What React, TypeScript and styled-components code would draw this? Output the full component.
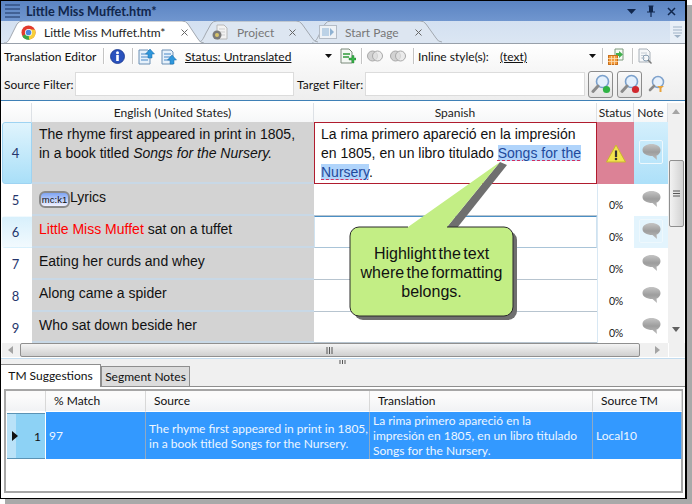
import React from "react";
import styled, { createGlobalStyle } from "styled-components";

const UI_FONT = `Lato, "Noto Sans", sans-serif`;
const CELL_FONT = `"Liberation Sans", Arial, sans-serif`;

const Global = createGlobalStyle`
  html, body { margin: 0; padding: 0; background: #fff; }
  body { font-family: ${UI_FONT}; font-size: 12px; color: #111; }
`;

const Page = styled.div`
  width: 692px;
  height: 504px;
  overflow: hidden;
  background: #fff;
`;

const Win = styled.div`
  position: relative;
  box-sizing: border-box;
  width: 687px;
  height: 499px;
  border: 1px solid #000;
  border-right-width: 2px;
  background: #fff;
  box-shadow: 5px 5px 0 #a9a9a9;
  display: flex;
  flex-direction: column;
`;

const TitleBar = styled.div`
  height: 20px;
  flex: none;
  display: flex;
  align-items: center;
  padding: 0 4px;
  background: linear-gradient(#5b84c2, #7096cf);
`;

const TitleText = styled.div`
  margin-left: 5px;
  font-weight: 700;
  font-size: 12.7px;
  color: #10264c;
  flex: 1;
`;

const TitleButton = styled.div`
  width: 20px;
  height: 20px;
  display: flex;
  align-items: center;
  justify-content: center;
`;

const TabStrip = styled.div`
  height: 22px;
  flex: none;
  position: relative;
  display: flex;
  background: linear-gradient(#d3e0f1, #dbe6f3);
  border-bottom: 1px solid #98a0aa;
  padding-left: 3px;
`;

const DocTab = styled.div<{ $w: number; $z: number; $active?: boolean }>`
  position: relative;
  width: ${(p) => p.$w}px;
  margin-right: -6px;
  z-index: ${(p) => p.$z};
  height: ${(p) => (p.$active ? 23 : 22)}px;
  color: ${(p) => (p.$active ? "#222" : "#777")};
`;

const TabBody = styled.div<{ $pad: number }>`
  position: relative;
  display: flex;
  align-items: center;
  height: 100%;
  padding-left: ${(p) => p.$pad}px;
  box-sizing: border-box;
  white-space: nowrap;
`;

const TabLabel = styled.span`
  margin-left: 8px;
  flex: 1;
`;

const TabShape = styled.svg`
  position: absolute;
  left: 0;
  top: 0;
`;

const TabClose = styled.svg<{ $right: number }>`
  flex: none;
  margin-right: ${(p) => p.$right}px;
`;

const StripMenu = styled.div`
  position: absolute;
  right: 0;
  top: 0;
  bottom: 0;
  width: 15px;
  background: #e8eff7;
  display: flex;
  align-items: center;
  justify-content: center;
`;

const Toolbar = styled.div`
  height: 24px;
  flex: none;
  display: flex;
  align-items: center;
  padding-left: 3px;
  background: linear-gradient(#fff, #f7f7f7);
  white-space: nowrap;
`;

const Gap = styled.span<{ $w: number }>`
  display: inline-block;
  flex: none;
  width: ${(p) => p.$w}px;
`;

const Sep = styled.span`
  flex: none;
  width: 1px;
  height: 16px;
  background: #c4c4c4;
  box-shadow: 1px 0 0 #fff;
`;

const Label = styled.span<{ $w: number }>`
  flex: none;
  width: ${(p) => p.$w}px;
  white-space: nowrap;
`;

const LinkText = styled(Label)`
  text-decoration: underline;
  color: #111;
`;

const FilterRow = styled.div`
  height: 32px;
  flex: none;
  display: flex;
  align-items: center;
  padding-left: 3px;
  background: linear-gradient(#f7f7f7, #eeeeee);
  border-bottom: 1px solid #3f80b6;
`;

const FilterInput = styled.div<{ $w: number }>`
  box-sizing: border-box;
  width: ${(p) => p.$w}px;
  height: 24px;
  background: #fff;
  border: 1px solid #dcdcdc;
  flex: none;
`;

const FindButton = styled.div`
  box-sizing: border-box;
  width: 25px;
  height: 27px;
  flex: none;
  border: 1px solid #8c8c8c;
  border-radius: 3px;
  background: linear-gradient(#fafafa, #e2e2e2);
  display: flex;
  align-items: center;
  justify-content: center;
`;

const GridArea = styled.div`
  display: flex;
  height: 240px;
  flex: none;
  margin-top: 2px;
  padding-left: 1px;
`;

const Table = styled.div`
  width: 666px;
  flex: none;
  display: grid;
  grid-template-columns: 30px 282px 283px 37px 34px;
  grid-template-rows: 19px 62px 32px 32px 32px 32px 31px;
  overflow: hidden;
`;

const HeadCell = styled.div`
  display: flex;
  align-items: center;
  justify-content: center;
  background: linear-gradient(#ffffff, #f6f7f8);
  border-right: 1px solid #dde1e6;
  box-sizing: border-box;
  color: #222;
`;

const RowHead = styled.div<{ $state?: "on" | "soft" }>`
  box-sizing: border-box;
  display: flex;
  align-items: center;
  justify-content: center;
  padding-right: 3px;
  font-size: 13px;
  color: #26366c;
  border-radius: 3px 0 0 3px;
  border: 1px solid
    ${(p) => (p.$state === "on" ? "#9ed3f2" : "transparent")};
  background: ${(p) =>
    p.$state === "on"
      ? "linear-gradient(#e0f4fd, #a9dff8)"
      : p.$state === "soft"
        ? "linear-gradient(#d8f0fc, #f2fafe)"
        : "#fff"};
`;

const SourceCell = styled.div<{ $tight?: boolean }>`
  box-sizing: border-box;
  background: #d3d3d3;
  border-bottom: 2px solid #c8d8e6;
  padding: ${(p) => (p.$tight ? 3 : 4)}px 7px 0;
  font-family: ${CELL_FONT};
  font-size: 14px;
  line-height: 19px;
  color: #111;
  white-space: nowrap;
`;

const TargetCell = styled.div<{ $state?: "error" | "focus" }>`
  box-sizing: border-box;
  background: #fff;
  padding: 2px 6px 0;
  font-family: ${CELL_FONT};
  font-size: 14px;
  line-height: 19px;
  color: #111;
  white-space: nowrap;
  border-bottom: 1px solid #b7c4cf;
  ${(p) => p.$state === "error" && "border: 1px solid #b01c2e;"}
  ${(p) => p.$state === "focus" && "border-top: 1px solid #4b8fc4; border-left: 1px solid #cfe2f0; border-right: 1px solid #cfe2f0; border-bottom-color: #a9c4d8;"}
`;

const Selected = styled.span`
  background: #b0d4fb;
  color: #1f4a9c;
  text-decoration: underline dashed #d03060 1px;
  text-underline-offset: 2px;
`;

const StatusCell = styled.div<{ $alert?: boolean }>`
  display: flex;
  align-items: center;
  justify-content: center;
  padding-top: ${(p) => (p.$alert ? 0 : 10)}px;
  box-sizing: border-box;
  font-size: 10.5px;
  letter-spacing: -0.3px;
  color: #222;
  background: ${(p) => (p.$alert ? "#dc8296" : "#fff")};
  border-left: 1px solid ${(p) => (p.$alert ? "#dc8296" : "#d8e8f4")};
`;

const NoteCell = styled.div<{ $state?: "on" | "soft" }>`
  display: flex;
  align-items: center;
  justify-content: center;
  box-sizing: border-box;
  background: ${(p) =>
    p.$state === "on"
      ? "linear-gradient(#d4effc, #ade0f9)"
      : p.$state === "soft"
        ? "#e3f4fd"
        : "#fff"};
`;

const NoteFrame = styled.div<{ $on: boolean }>`
  width: 24px;
  height: 24px;
  box-sizing: border-box;
  border: 1px solid ${(p) => (p.$on ? "#eef8fd" : "transparent")};
  border-radius: 2px;
  display: flex;
  align-items: center;
  justify-content: center;
  margin-top: -3px;
`;

const Tag = styled.span`
  display: inline-block;
  box-sizing: border-box;
  width: 31px;
  height: 17px;
  line-height: 13px;
  border: 2px solid #8a8a8a;
  border-radius: 6px;
  background: linear-gradient(#7ea4f4, #f2f2ff);
  font-size: 9.5px;
  text-align: center;
  vertical-align: -1px;
  color: #111;
`;

const RedText = styled.span`
  color: #f00;
`;

const VScroll = styled.div`
  width: 16px;
  flex: none;
  background: #f0f0f0;
  display: flex;
  flex-direction: column;
  align-items: center;
  padding: 6px 0 8px;
  box-sizing: border-box;
`;

const VThumb = styled.div`
  box-sizing: border-box;
  width: 15px;
  height: 67px;
  margin-top: 43px;
  margin-bottom: 100px;
  flex: none;
  border: 1px solid #8f8f8f;
  border-radius: 2px;
  background: linear-gradient(90deg, #f2f2f2, #d2d2d2);
  display: flex;
  align-items: center;
  justify-content: center;
`;

const HScroll = styled.div`
  height: 14px;
  flex: none;
  margin-left: 1px;
  background: #f0f0f0;
  display: flex;
  align-items: center;
`;

const HThumb = styled.div`
  box-sizing: border-box;
  width: 620px;
  height: 14px;
  margin-left: 4px;
  flex: none;
  border: 1px solid #8f8f8f;
  border-radius: 2px;
  background: linear-gradient(#f4f4f4, #cfcfcf);
  display: flex;
  align-items: center;
  justify-content: center;
`;

const ScrollCorner = styled.div`
  margin-left: auto;
  width: 16px;
  height: 14px;
  background: #f0f0f0;
  border-left: 1px solid #fff;
`;

const Splitter = styled.div`
  height: 5px;
  flex: none;
  margin-top: 1px;
  border-top: 1px solid #c3dcef;
  background: #f0f0f0;
  display: flex;
  justify-content: center;
  align-items: center;
`;

const LowerPanel = styled.div`
  flex: 1;
  display: flex;
  flex-direction: column;
  background: #f0f0f0;
`;

const SubTabs = styled.div`
  box-sizing: border-box;
  height: 23px;
  flex: none;
  display: flex;
  align-items: flex-end;
  border-bottom: 1px solid #8e8e8e;
`;

const SubTab = styled.div<{ $active?: boolean }>`
  box-sizing: border-box;
  height: ${(p) => (p.$active ? 23 : 20)}px;
  width: ${(p) => (p.$active ? 100 : 89)}px;
  display: flex;
  align-items: center;
  justify-content: center;
  padding-bottom: ${(p) => (p.$active ? 2 : 0)}px;
  color: #111;
  background: ${(p) => (p.$active ? "#fff" : "#dcdcdc")};
  border: 1px solid #8e8e8e;
  border-bottom: none;
  border-left: ${(p) => (p.$active ? "none" : "1px solid #8e8e8e")};
  margin-bottom: ${(p) => (p.$active ? -1 : 0)}px;
  position: relative;
`;

const TmOuter = styled.div`
  flex: 1;
  background: #fff;
  padding: 2px 2px 5px 3px;
`;

const TmGrid = styled.div`
  box-sizing: border-box;
  height: 104px;
  border: 2px solid #a6a6a6;
  background: #fff;
  display: grid;
  grid-template-columns: 40px 100px 224px 223px 89px;
  grid-template-rows: 21px 47px;
`;

const TmHead = styled.div`
  display: flex;
  align-items: center;
  padding: 0 0 2px 8px;
  box-sizing: border-box;
  background: linear-gradient(#fbfbfb 0 30%, #f1f2f4);
  border-right: 1px solid #d8d8d8;
  border-bottom: 1px solid #fff;
  color: #111;
`;

const TmRowHead = styled.div`
  box-sizing: border-box;
  display: flex;
  align-items: center;
  justify-content: space-between;
  padding: 0 4px 0 5px;
  margin: 1px 1px 0 1px;
  border-top: 1px solid #5a93b5;
  border-bottom: 1px solid #5a93b5;
  background: linear-gradient(90deg, #b9e2f8 0 9px, #8dd2f5 9px);
  color: #111;
`;

const TmCell = styled.div`
  box-sizing: border-box;
  background: #3399ff;
  color: #eef6ff;
  line-height: 15px;
  display: flex;
  align-items: center;
  padding: 0 3px;
  border-right: 1px solid #8fa9c4;
  white-space: pre;
  overflow: hidden;
`;

const Callout = styled.div`
  position: absolute;
  left: 339px;
  top: 149px;
  width: 190px;
  height: 175px;
`;

const CalloutArt = styled.svg`
  position: absolute;
  left: 0;
  top: 0;
`;

const CalloutText = styled.div`
  position: absolute;
  left: 10px;
  top: 94px;
  width: 163px;
  text-align: center;
  font-family: ${CELL_FONT};
  font-size: 16px;
  line-height: 19px;
  word-spacing: -2px;
  color: #111;
`;

const MenuIcon = () => (
  <svg width="16" height="14" viewBox="0 0 16 14">
    {[1, 5, 9, 13].map((y) => (
      <line key={y} x1="0" x2="15" y1={y} y2={y} stroke="#1d3560" strokeWidth="1" />
    ))}
  </svg>
);

const ChromeIcon = () => (
  <svg width="15" height="15" viewBox="0 0 16 16" style={{ flex: "none" }}>
    <circle cx="8" cy="8" r="7.5" fill="#e33b2e" />
    <path d="M8 8 L1.4 11.6 A7.5 7.5 0 0 0 9.5 15.4 Z" fill="#3aa648" />
    <path d="M8 8 L8.6 15.5 A7.5 7.5 0 0 0 14.9 5 L8 4.5 Z" fill="#f7cf3a" />
    <circle cx="8" cy="8" r="3.8" fill="#fff" />
    <circle cx="8" cy="8" r="3" fill="#4a86e0" />
  </svg>
);

const ProjectIcon = () => (
  <svg width="17" height="16" viewBox="0 0 17 16" style={{ flex: "none" }}>
    <path d="M5 1h7l3 3v11H5z" fill="#f2f2f2" stroke="#b8b8b8" />
    <path d="M7 5h6M7 8h6M7 11h6" stroke="#cfcfcf" />
    <circle cx="5" cy="11" r="4.500" fill="#7a7a7a" />
    <circle cx="5" cy="11" r="2" fill="#d8c46a" />
  </svg>
);

const StartIcon = () => (
  <svg width="18" height="14" viewBox="0 0 18 14" style={{ flex: "none" }}>
    <rect x="0.500" y="0.500" width="17" height="13" fill="#eef2f6" stroke="#b4bcc6" />
    <rect x="3" y="3" width="7" height="8" fill="#bcd2e6" />
    <path d="M11 3l4 4-4 4z" fill="#8fb2d2" />
  </svg>
);

const InfoIcon = () => (
  <svg width="15" height="15" viewBox="0 0 15 15" style={{ flex: "none" }}>
    <circle cx="7.500" cy="7.500" r="7" fill="#2a52be" stroke="#17358c" strokeWidth="0.800" />
    <rect x="6.200" y="6" width="2.600" height="6" fill="#fff" />
    <circle cx="7.500" cy="3.800" r="1.500" fill="#fff" />
  </svg>
);

const DocUpIcon = ({ flip }: { flip?: boolean }) => (
  <svg width="17" height="17" viewBox="0 0 17 17" style={{ flex: "none" }}>
    <path d="M1 2h9l2 2v12H1z" fill="#e6f1fb" stroke="#6a8fb4" />
    <path d="M3 6h7M3 9h7M3 12h7" stroke="#4a8ac8" strokeWidth="1.200" />
    <path
      d={flip ? "M11 7l4.500 5H13v4H9v-4H6.500z" : "M12 1l4.500 5H14v4h-4V6H7.500z"}
      fill="#2f97dc"
      stroke="#1b6ca8"
      strokeWidth="0.500"
    />
  </svg>
);

const Caret = () => (
  <svg width="7" height="4" viewBox="0 0 7 4" style={{ flex: "none" }}>
    <path d="M0 0h7L3.500 4z" fill="#111" />
  </svg>
);

const AddDocIcon = () => (
  <svg width="16" height="17" viewBox="0 0 16 17" style={{ flex: "none" }}>
    <path d="M1 1h8l3 3v11H1z" fill="#f4f8f4" stroke="#7a8a7a" />
    <path d="M3 6h7M3 9h6" stroke="#2f9a3a" strokeWidth="1.400" />
    <path d="M9 10h3V7.500h2V10h2v2h-2v3h-2v-3H9z" fill="#39b54a" stroke="#1d7a2a" strokeWidth="0.400" />
  </svg>
);

const RingsIcon = () => (
  <svg width="16" height="12" viewBox="0 0 16 12" style={{ flex: "none" }}>
    <circle cx="5.500" cy="6" r="5" fill="#d2d2d2" stroke="#a8a8a8" />
    <circle cx="10.500" cy="6" r="5" fill="#e4e4e4" fillOpacity="0.700" stroke="#a8a8a8" />
  </svg>
);

const ExportIcon = () => (
  <svg width="17" height="17" viewBox="0 0 17 17" style={{ flex: "none" }}>
    <path d="M7 1h8v11H7z" fill="#f6fbf6" stroke="#7d9a7d" />
    <path d="M8 5h3V3l4 3.500-4 3.500V8H8z" fill="#42b04e" />
    <rect x="0.500" y="7.500" width="9" height="9" fill="#f39a3c" stroke="#c8701c" />
    <path d="M0 10.500h10M0 13.500h10M3.500 8v9M6.500 8v9" stroke="#fbe0b8" strokeWidth="0.800" />
  </svg>
);

const PreviewIcon = () => (
  <svg width="15" height="16" viewBox="0 0 15 16" style={{ flex: "none" }}>
    <path d="M1 1h8l3 3v10H1z" fill="#f5f7f9" stroke="#a8b0b8" />
    <path d="M3 5h6M3 7.500h6M3 10h4" stroke="#c4ccd4" />
    <circle cx="8" cy="10" r="3" fill="none" stroke="#8aa0b4" />
    <path d="M10 12l3.500 3.500" stroke="#7a7a7a" strokeWidth="1.400" />
  </svg>
);

const FindIcon = ({ dot }: { dot: string }) => (
  <svg width="20" height="20" viewBox="0 0 20 20">
    <circle cx="11.500" cy="7.500" r="6" fill="#e4f0fc" stroke="#7aa0cc" strokeWidth="1.600" />
    <path d="M7 12L2 17.500" stroke="#8a8a8a" strokeWidth="3" strokeLinecap="round" />
    <circle cx="15.500" cy="15.500" r="3.600" fill={dot} />
  </svg>
);

const FindTool = () => (
  <svg width="18" height="18" viewBox="0 0 18 18" style={{ flex: "none" }}>
    <circle cx="10" cy="7" r="5.500" fill="#e8f1fb" stroke="#7fa2cc" strokeWidth="1.500" />
    <path d="M6 11l-4 4" stroke="#8a8a8a" strokeWidth="2.600" strokeLinecap="round" />
    <path d="M9 11h7l-2.500 2.200V17h-2v-3.800z" fill="#e8a33c" />
  </svg>
);

const Bubble = () => (
  <svg width="19" height="18" viewBox="0 0 19 18">
    <defs>
      <linearGradient id="bub" x1="0" x2="0" y1="0" y2="1">
        <stop offset="0" stopColor="#c4c4c4" />
        <stop offset="0.500" stopColor="#9d9d9d" />
        <stop offset="1" stopColor="#bcbcbc" />
      </linearGradient>
    </defs>
    <path d="M9.500 1C14.500 1 18.500 3.500 18.500 7S15.500 12.500 14.500 12.600L15 17 10.500 13C4.500 13 .5 10.500 .5 7S4.500 1 9.500 1z" fill="url(#bub)" />
  </svg>
);

const Warning = () => (
  <svg width="20" height="19" viewBox="0 0 20 19">
    <path d="M10 1L19.500 18H.5z" fill="#f3e34e" stroke="#c9b62e" strokeLinejoin="round" />
    <rect x="8.900" y="6.500" width="2.200" height="6.500" fill="#333" />
    <circle cx="10" cy="15" r="1.300" fill="#333" />
  </svg>
);

const Grip = ({ vertical, size = 7 }: { vertical?: boolean; size?: number }) => (
  <svg
    width={vertical ? 7 : 8}
    height={vertical ? 8 : size}
    viewBox={vertical ? "0 0 7 8" : `0 0 8 ${size}`}
  >
    {vertical
      ? [1, 3.5, 6].map((y) => <line key={y} x1="0" x2="7" y1={y} y2={y} stroke="#555" />)
      : [1, 3.5, 6].map((x) => <line key={x} y1="0" y2={size} x1={x} x2={x} stroke="#555" />)}
  </svg>
);

const Arrow = ({ dir }: { dir: "up" | "down" | "left" | "right" }) => {
  const d = {
    up: "M0 5L4 0l4 5z",
    down: "M0 0h8L4 5z",
    left: "M5 0v8L0 4z",
    right: "M0 0v8l5-4z",
  }[dir];
  return (
    <svg width="8" height="8" viewBox="0 0 8 8" style={{ flex: "none" }}>
      <path d={d} fill={dir === "down" ? "#606060" : "#a4a4a4"} />
    </svg>
  );
};

const tabPath = (w: number, h: number) =>
  `M0 ${h} C4 ${h} 5 ${h - 3} 8 ${h - 9} L13 3 Q15 0 19 0 L${w - 22} 0 Q${w - 18} 0 ${w - 16} 3 L${w - 6} ${h - 4} Q${w - 4} ${h} ${w} ${h}`;

const Tab = ({
  w,
  z,
  active,
  icon,
  label,
  pad,
  close,
}: {
  w: number;
  z: number;
  active?: boolean;
  icon: React.ReactNode;
  label: string;
  pad: number;
  close: number;
}) => (
  <DocTab $w={w} $z={z} $active={active}>
    <TabShape width={w} height={active ? 23 : 22}>
      <path
        d={tabPath(w, active ? 22 : 21)}
        fill={active ? "#fff" : "#dde6f1"}
        stroke="#a2a8b0"
      />
    </TabShape>
    <TabBody $pad={pad}>
      {icon}
      <TabLabel>{label}</TabLabel>
      <TabClose $right={close} width="7" height="7" viewBox="0 0 7 7">
        <path d="M.5.5l6 6M6.500.5l-6 6" stroke="#666" />
      </TabClose>
    </TabBody>
  </DocTab>
);

type Row = {
  id: number;
  src: React.ReactNode;
  state?: "on" | "soft";
  target?: React.ReactNode;
  targetState?: "error" | "focus";
  alert?: boolean;
};

const rows: Row[] = [
  {
    id: 4,
    state: "on",
    alert: true,
    targetState: "error",
    src: (
      <>
        The rhyme first appeared in print in 1805,
        <br />
        in a book titled <i>Songs for the Nursery.</i>
      </>
    ),
    target: (
      <>
        La rima primero apareció en la impresión
        <br />
        en 1805, en un libro titulado <Selected>Songs for the</Selected>
        <br />
        <Selected>Nursery</Selected>.
      </>
    ),
  },
  {
    id: 5,
    src: (
      <>
        <Tag>mc:k1</Tag>Lyrics
      </>
    ),
  },
  {
    id: 6,
    state: "soft",
    targetState: "focus",
    src: (
      <>
        <RedText>Little Miss Muffet</RedText> sat on a tuffet
      </>
    ),
  },
  { id: 7, src: "Eating her curds and whey" },
  { id: 8, src: "Along came a spider" },
  { id: 9, src: "Who sat down beside her" },
];

export default function App() {
  return (
    <Page>
      <Global />
      <Win>
        <TitleBar>
          <MenuIcon />
          <TitleText>Little Miss Muffet.htm*</TitleText>
          <TitleButton>
            <svg width="9" height="5" viewBox="0 0 9 5">
              <path d="M0 0h9L4.500 5z" fill="#10264c" />
            </svg>
          </TitleButton>
          <TitleButton>
            <svg width="8" height="12" viewBox="0 0 8 12">
              <path d="M1.500 0.500h5v1h-.5v5H8v1H4.600V12H3.400V7.500H0v-1h2v-5h-.5z" fill="#10264c" />
            </svg>
          </TitleButton>
          <TitleButton>
            <svg width="9" height="9" viewBox="0 0 9 9">
              <path d="M1 1l7 7M8 1L1 8" stroke="#10264c" strokeWidth="1.500" />
            </svg>
          </TitleButton>
        </TitleBar>

        <TabStrip>
          <Tab w={200} z={3} active pad={17} icon={<ChromeIcon />} label="Little Miss Muffet.htm*" close={16} />
          <Tab w={120} z={2} pad={14} icon={<ProjectIcon />} label="Project" close={22} />
          <Tab w={130} z={1} pad={7} icon={<StartIcon />} label="Start Page" close={20} />
          <StripMenu>
            <svg width="9" height="12" viewBox="0 0 9 12">
              <path d="M0 1h9M0 4h9M0 7h9" stroke="#9fb2c6" />
              <path d="M1 9h7l-3.500 3z" fill="#9fb2c6" />
            </svg>
          </StripMenu>
        </TabStrip>

        <Toolbar>
          <Label $w={99}>Translation Editor</Label>
          <Sep />
          <Gap $w={6} />
          <InfoIcon />
          <Gap $w={7} />
          <Sep />
          <Gap $w={5} />
          <DocUpIcon />
          <Gap $w={6} />
          <DocUpIcon flip />
          <Gap $w={7} />
          <LinkText $w={140}>Status: Untranslated</LinkText>
          <Caret />
          <Gap $w={8} />
          <AddDocIcon />
          <Gap $w={5} />
          <Sep />
          <Gap $w={5} />
          <RingsIcon />
          <Gap $w={7} />
          <RingsIcon />
          <Gap $w={7} />
          <Sep />
          <Gap $w={4} />
          <Label $w={82}>Inline style(s):</Label>
          <LinkText $w={89}>(text)</LinkText>
          <Caret />
          <Gap $w={6} />
          <Sep />
          <Gap $w={5} />
          <ExportIcon />
          <Gap $w={7} />
          <Sep />
          <Gap $w={5} />
          <PreviewIcon />
        </Toolbar>

        <FilterRow>
          <Label $w={71}>Source Filter:</Label>
          <FilterInput $w={219} />
          <Gap $w={3} />
          <Label $w={68}>Target Filter:</Label>
          <FilterInput $w={220} />
          <Gap $w={3} />
          <FindButton>
            <FindIcon dot="#2fb344" />
          </FindButton>
          <Gap $w={4} />
          <FindButton>
            <FindIcon dot="#d0282e" />
          </FindButton>
          <Gap $w={6} />
          <FindTool />
        </FilterRow>

        <GridArea>
          <Table>
            <HeadCell />
            <HeadCell>English (United States)</HeadCell>
            <HeadCell>Spanish</HeadCell>
            <HeadCell>Status</HeadCell>
            <HeadCell>Note</HeadCell>
            {rows.map((r) => (
              <React.Fragment key={r.id}>
                <RowHead $state={r.state}>{r.id}</RowHead>
                <SourceCell $tight={r.alert}>{r.src}</SourceCell>
                <TargetCell $state={r.targetState}>{r.target}</TargetCell>
                <StatusCell $alert={r.alert}>{r.alert ? <Warning /> : "0%"}</StatusCell>
                <NoteCell $state={r.state}>
                  <NoteFrame $on={Boolean(r.state)}>
                    <Bubble />
                  </NoteFrame>
                </NoteCell>
              </React.Fragment>
            ))}
          </Table>
          <VScroll>
            <Arrow dir="up" />
            <VThumb>
              <Grip vertical />
            </VThumb>
            <Arrow dir="down" />
          </VScroll>
        </GridArea>

        <HScroll>
          <Gap $w={6} />
          <Arrow dir="left" />
          <HThumb>
            <Grip />
          </HThumb>
          <Gap $w={15} />
          <Arrow dir="right" />
          <ScrollCorner />
        </HScroll>

        <Splitter>
          <Grip size={4} />
        </Splitter>

        <LowerPanel>
          <SubTabs>
            <SubTab $active>TM Suggestions</SubTab>
            <SubTab>Segment Notes</SubTab>
          </SubTabs>
          <TmOuter>
            <TmGrid>
              <TmHead />
              <TmHead>% Match</TmHead>
              <TmHead>Source</TmHead>
              <TmHead>Translation</TmHead>
              <TmHead>Source TM</TmHead>
              <TmRowHead>
                <svg width="6" height="10" viewBox="0 0 6 10">
                  <path d="M0 0l6 5-6 5z" fill="#111" />
                </svg>
                <span>1</span>
              </TmRowHead>
              <TmCell>97</TmCell>
              <TmCell>{"The rhyme first appeared in print in 1805,\nin a book titled Songs for the Nursery."}</TmCell>
              <TmCell>{"La rima primero apareció en la\nimpresión en 1805, en un libro titulado\nSongs for the Nursery."}</TmCell>
              <TmCell>Local10</TmCell>
            </TmGrid>
          </TmOuter>
        </LowerPanel>

        <Callout>
          <CalloutArt width="190" height="175" viewBox="0 0 190 175">
            <path
              d="M19 77h145a9 9 0 0 1 9 9v71a9 9 0 0 1-9 9H19a9 9 0 0 1-9-9V86a9 9 0 0 1 9-9z"
              fill="#6f6f6f"
              transform="translate(4 4)"
            />
            <path d="M107 77L160 12 167 15 117 78z" fill="#6f6f6f" />
            <path
              d="M19 77h49L160 12 107 77h57a9 9 0 0 1 9 9v71a9 9 0 0 1-9 9H19a9 9 0 0 1-9-9V86a9 9 0 0 1 9-9z"
              fill="#c3ee85"
            />
            <path
              d="M68 77H19a9 9 0 0 0-9 9v71a9 9 0 0 0 9 9h145a9 9 0 0 0 9-9V86a9 9 0 0 0-9-9h-57"
              fill="none"
              stroke="#2a2a2a"
              strokeWidth="1"
            />
          </CalloutArt>
          <CalloutText>
            Highlight the text
            <br />
            where the formatting
            <br />
            belongs.
          </CalloutText>
        </Callout>
      </Win>
    </Page>
  );
}
